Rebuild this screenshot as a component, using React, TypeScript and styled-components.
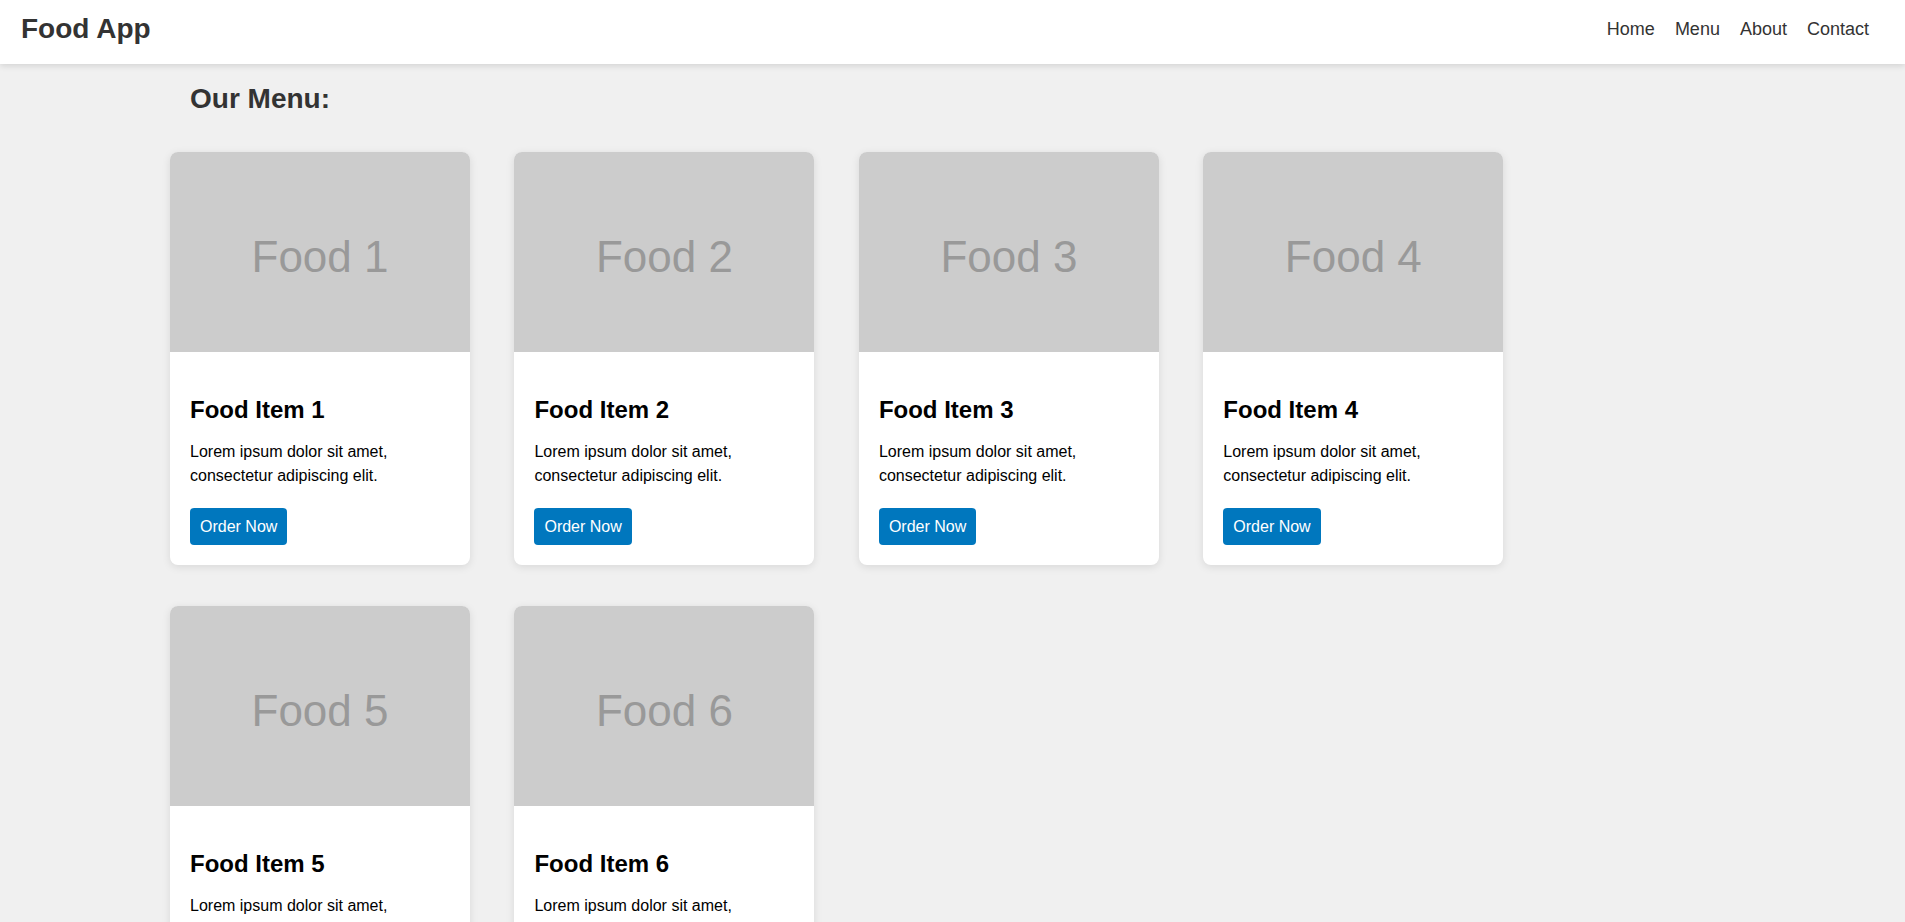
import React from "react";
import styled, { createGlobalStyle } from "styled-components";

const GlobalStyle = createGlobalStyle`
  html, body {
    margin: 0;
    padding: 0;
    background: #f0f0f0;
    font-family: "Liberation Sans", Arial, sans-serif;
    color: #000;
  }
  * { box-sizing: border-box; }
`;

const Header = styled.header`
  height: 64px;
  background: #ffffff;
  box-shadow: 0 2px 6px rgba(0, 0, 0, 0.12);
  display: flex;
  align-items: center;
  justify-content: space-between;
  padding: 13px 36px 19px 21px;
  position: relative;
  z-index: 1;
`;

const Logo = styled.div`
  font-size: 28px;
  line-height: 32px;
  font-weight: 700;
  color: #333;
`;

const Nav = styled.nav`
  display: flex;
  gap: 20px;
`;

const NavLink = styled.a`
  font-size: 18px;
  line-height: 32px;
  color: #333;
  text-decoration: none;
`;

const Main = styled.main`
  padding: 0 0 40px 170px;
`;

const SectionTitle = styled.h2`
  margin: 19px 0 37px 20px;
  font-size: 28px;
  line-height: 32px;
  font-weight: 700;
  color: #333;
`;

const Grid = styled.div`
  display: grid;
  grid-template-columns: repeat(4, 300px);
  column-gap: 44.45px;
  row-gap: 41px;
`;

const Card = styled.div`
  width: 300px;
  background: #ffffff;
  border-radius: 8px;
  overflow: hidden;
  box-shadow: 0 2px 8px rgba(0, 0, 0, 0.1);
`;

const ImagePlaceholder = styled.div`
  height: 200px;
  background: #cccccc;
  color: #999999;
  font-size: 44px;
  display: flex;
  align-items: center;
  justify-content: center;
  padding-top: 9px;
`;

const CardBody = styled.div`
  padding: 20px;
`;

const CardTitle = styled.h3`
  margin: 24px 0 16px;
  font-size: 24px;
  line-height: 28px;
  font-weight: 700;
  color: #000;
`;

const CardText = styled.p`
  margin: 0 0 20px;
  font-size: 16px;
  line-height: 24px;
  color: #000;
`;

const OrderButton = styled.button`
  display: block;
  width: fit-content;
  padding: 10px;
  border: none;
  border-radius: 4px;
  background: #0077be;
  color: #ffffff;
  font-family: "Liberation Sans", Arial, sans-serif;
  font-size: 16px;
  line-height: 17px;
  cursor: pointer;
`;

const items = [1, 2, 3, 4, 5, 6];

export default function App() {
  return (
    <>
      <GlobalStyle />
      <Header>
        <Logo>Food App</Logo>
        <Nav>
          <NavLink href="#">Home</NavLink>
          <NavLink href="#">Menu</NavLink>
          <NavLink href="#">About</NavLink>
          <NavLink href="#">Contact</NavLink>
        </Nav>
      </Header>
      <Main>
        <SectionTitle>Our Menu:</SectionTitle>
        <Grid>
          {items.map((n) => (
            <Card key={n}>
              <ImagePlaceholder>Food {n}</ImagePlaceholder>
              <CardBody>
                <CardTitle>Food Item {n}</CardTitle>
                <CardText>
                  Lorem ipsum dolor sit amet, consectetur adipiscing elit.
                </CardText>
                <OrderButton>Order Now</OrderButton>
              </CardBody>
            </Card>
          ))}
        </Grid>
      </Main>
    </>
  );
}
